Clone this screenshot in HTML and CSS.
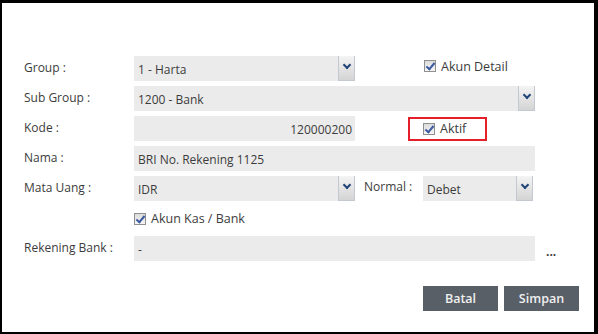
FILE: index.html
```html
<!doctype html>
<html>
<head>
<meta charset="utf-8">
<title>Akun</title>
<link rel="stylesheet" href="styles.css">
</head>
<body>
<div class="frame">
	<div class="form">
		<div class="row">
			<span class="lbl">Group :</span>
			<div class="sel w-half"><span>1 - Harta</span><i class="arr"></i></div>
			<label class="chk ml-detail"><b class="box"></b>Akun Detail</label>
		</div>
		<div class="row">
			<span class="lbl">Sub Group :</span>
			<div class="sel w-full"><span>1200 - Bank</span><i class="arr"></i></div>
		</div>
		<div class="row">
			<span class="lbl">Kode :</span>
			<div class="inp w-half right"><span>120000200</span></div>
			<div class="mark"><label class="chk"><b class="box"></b>Aktif</label></div>
		</div>
		<div class="row">
			<span class="lbl">Nama :</span>
			<div class="inp w-full"><span>BRI No. Rekening 1125</span></div>
		</div>
		<div class="row">
			<span class="lbl">Mata Uang :</span>
			<div class="sel w-half"><span>IDR</span><i class="arr"></i></div>
			<span class="lbl2">Normal :</span>
			<div class="sel w-small"><span>Debet</span><i class="arr"></i></div>
		</div>
		<div class="row">
			<span class="lbl"></span>
			<label class="chk"><b class="box"></b>Akun Kas / Bank</label>
		</div>
		<div class="row">
			<span class="lbl">Rekening Bank :</span>
			<div class="inp w-full"><span>-</span></div>
			<span class="more">...</span>
		</div>
	</div>
	<div class="btns">
		<a class="btn" href="javascript:;">Batal</a>
		<a class="btn" href="javascript:;">Simpan</a>
	</div>
</div>
</body>
</html>
```
FILE: styles.css
```css
*{ margin:0; padding:0; box-sizing:border-box;}
body{ background:#fff; font-family:"Open Sans","Noto Sans",sans-serif; font-size:12px; color:#3c3c3c;}
.frame{ width:598px; height:334px; border:solid #000; border-width:3px 4px 2px 2px; padding:53px 0 0 22px; background:#fff;}
.row{ display:flex; align-items:center; height:25px; margin-bottom:5px;}
.lbl{ width:110px; flex:none; margin-top:-3px;}
.sel,.inp{ height:25px; background:#ebebeb; display:flex; align-items:center; padding-left:4px; position:relative; flex:none;}
.sel span,.inp span{ padding-top:2px;}
.w-half{ width:221px;}
.w-full{ width:401px;}
.w-small{ width:110px;}
.right{ justify-content:flex-end; padding-right:3px;}
.arr{ position:absolute; right:0; top:0; width:17px; height:25px; background:linear-gradient(#f4f4f4,#d4d4d4); border:1px solid #c4c8d0; border-width:0 1px 1px 1px;}
.arr:after{ content:""; position:absolute; left:5px; top:6px; width:4px; height:4px; border:solid #22457a; border-width:0 2px 2px 0; transform:rotate(45deg);}
.chk{ display:flex; align-items:center; font-size:12.5px;}
.box{ width:12px; height:12px; border:1px solid #8f8f8f; background:linear-gradient(#dcdcdc,#f6f6f6); margin-right:5px; position:relative;}
.box:after{ content:""; position:absolute; left:3px; top:0px; width:3px; height:7px; border:solid #3a5aa0; border-width:0 2px 2px 0; transform:rotate(40deg);}
.ml-detail{ margin-left:69px; margin-top:-5px;}
.mark{ margin-left:53px; width:79px; height:24px; border:2px solid #e41f2a; padding-left:13px; display:flex; align-items:center;}
.lbl2{ margin-left:9px; width:59px; margin-top:-5px;}
.more{ margin-left:11px; margin-top:6px; font-weight:bold;}
.btns{ display:flex; justify-content:flex-end; gap:6px; margin-top:25px; padding-right:15px;}
.btn{ width:75px; height:25px; background:#585f67; color:#f0f0f0; text-decoration:none; text-align:center; line-height:25px; font-size:12.5px; font-weight:600;}
```
